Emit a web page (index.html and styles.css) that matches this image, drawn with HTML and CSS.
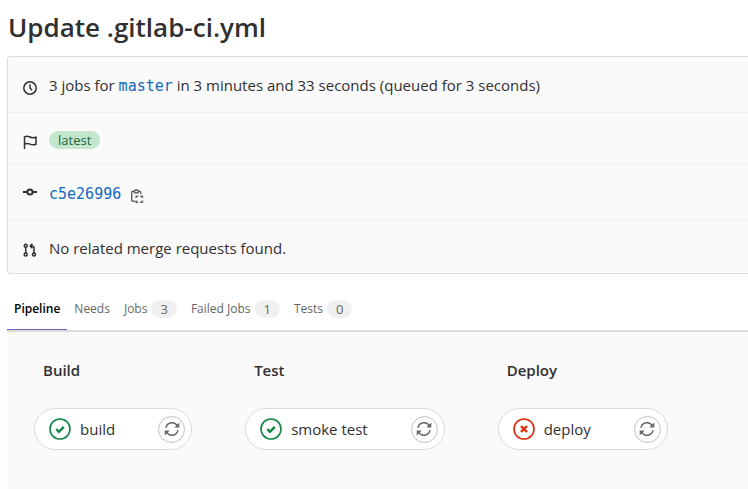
FILE: index.html
```html
<!DOCTYPE html>
<html lang="en">
<head>
  <meta charset="utf-8">
  <title>Update .gitlab-ci.yml</title>
  <link rel="stylesheet" href="styles.css">
</head>
<body>

<!-- shared icons -->
<svg class="hidden">
  <symbol id="retry" viewBox="0 0 16 16">
    <path d="M2 6.8A6.1 6.1 0 0 1 13.4 5M14 9.2A6.1 6.1 0 0 1 2.6 11" fill="none" stroke="currentColor" stroke-width="1.5"/>
    <path d="M15.3 1.5v5h-5zM.7 14.5v-5h5z" fill="currentColor"/>
  </symbol>
  <symbol id="success" viewBox="0 0 22 22">
    <circle cx="11" cy="11" r="10" fill="none" stroke="currentColor" stroke-width="1.6"/>
    <path d="M7.3 11.2l2.7 2.6 4.8-4.9" fill="none" stroke="currentColor" stroke-width="2.4"/>
  </symbol>
  <symbol id="failed" viewBox="0 0 22 22">
    <circle cx="11" cy="11" r="10" fill="none" stroke="currentColor" stroke-width="1.6"/>
    <path d="M8 8l6 6M14 8l-6 6" fill="none" stroke="currentColor" stroke-width="2.4"/>
  </symbol>
</svg>

<h1>Update .gitlab-ci.yml</h1>

<div class="info-well">
  <div class="well-row">
    <svg class="icon low" viewBox="0 0 14 14">
      <circle cx="7" cy="7" r="6.2"/>
      <path d="M7 3.2V7l2 2.2"/>
    </svg>
    <span>3 jobs for <a class="mono" href="#">master</a> in 3 minutes and 33 seconds (queued for 3 seconds)</span>
  </div>
  <div class="well-row">
    <svg class="icon low" viewBox="0 0 14 14">
      <path d="M1.5 14V1.8c2-1 3.5-.8 5.500.2s3.5 1.2 6 .3v7c-2.5.9-4 .7-6-.2s-3.5-1-5.500 0"/>
    </svg>
    <span class="badge-latest">latest</span>
  </div>
  <div class="well-row">
    <svg class="icon" viewBox="0 0 14 14">
      <circle cx="7" cy="5" r="2.6" stroke-width="2"/>
      <path d="M0 5h4M10 5h4" stroke-width="2"/>
    </svg>
    <a class="mono" href="#">c5e26996</a>
    <button class="copy" aria-label="Copy commit SHA">
      <svg class="icon low" viewBox="0 0 14 14">
        <path d="M5 12.3H2.7a1 1 0 0 1-1-1V3.2a1 1 0 0 1 1-1H4M8.5 2.2h1.2a1 1 0 0 1 1 1V5"/>
        <path d="M4.5 1.8V3.7h3.7V1.8L6.3.7z"/>
        <path d="M6.200 9V7.200h2M10.200 7.200h2.200V9M12.400 11.500v1.800h-2.200M8.200 13.300h-2v-1.800"/>
      </svg>
    </button>
  </div>
  <div class="well-row">
    <svg class="icon low" viewBox="0 0 14 14">
      <circle cx="2.7" cy="2.7" r="1.500"/>
      <circle cx="2.7" cy="11.600" r="1.500"/>
      <circle cx="11" cy="11.600" r="1.500"/>
      <path d="M2.7 4.2v6M11 10V5q0-2-2-2H8M9.4.8L7.2 3l2.2 2.2"/>
    </svg>
    <span>No related merge requests found.</span>
  </div>
</div>

<nav class="tabs">
  <a class="tab active" href="#">Pipeline</a>
  <a class="tab" href="#">Needs</a>
  <a class="tab" href="#">Jobs <span class="count">3</span></a>
  <a class="tab" href="#">Failed Jobs <span class="count">1</span></a>
  <a class="tab" href="#">Tests <span class="count">0</span></a>
</nav>

<div class="graph">
  <div class="stage">
    <h2>Build</h2>
    <div class="job">
      <svg class="status success"><use href="#success"/></svg>
      <a href="#">build</a>
      <button class="retry" aria-label="Retry build"><svg><use href="#retry"/></svg></button>
    </div>
  </div>
  <div class="stage">
    <h2>Test</h2>
    <div class="job">
      <svg class="status success"><use href="#success"/></svg>
      <a href="#">smoke test</a>
      <button class="retry" aria-label="Retry smoke test"><svg><use href="#retry"/></svg></button>
    </div>
  </div>
  <div class="stage">
    <h2>Deploy</h2>
    <div class="job">
      <svg class="status failed"><use href="#failed"/></svg>
      <a href="#">deploy</a>
      <button class="retry" aria-label="Retry deploy"><svg><use href="#retry"/></svg></button>
    </div>
  </div>
</div>

</body>
</html>
```
FILE: styles.css
```css
* {
  box-sizing: border-box;
}

body {
  margin: 0;
  padding-left: 7px;
  min-height: 100vh;
  display: flex;
  flex-direction: column;
  font-family: "Open Sans", "Noto Sans", sans-serif;
  font-size: 15px;
  line-height: 22px;
  color: #303030;
}

a {
  color: #1068bf;
  text-decoration: none;
}

button {
  padding: 0;
  border: 0;
  background: none;
  color: #666;
  cursor: pointer;
}

.hidden {
  display: none;
}

h1 {
  margin: 0;
  padding: 7px 1px 9px;
  font-size: 26px;
  line-height: 40px;
  font-weight: 600;
}

.info-well {
  border: 1px solid #dbdbdb;
  border-right: 0;
  border-radius: 4px 0 0 4px;
  background: #fafafa;
}

.well-row {
  display: flex;
  align-items: center;
  height: 52px;
  padding: 2px 15px 0;
  border-bottom: 1px solid #f0f0f0;
}

.well-row:nth-child(odd) {
  height: 56px;
}

.well-row:last-child {
  border-bottom: 0;
}

.well-row > .icon {
  margin-right: 12px;
}

.icon {
  width: 14px;
  height: 14px;
  fill: none;
  stroke: currentColor;
  stroke-width: 1.5;
}

.well-row .low {
  margin-top: 4px;
}

.mono {
  font-family: "DejaVu Sans Mono", monospace;
}

.badge-latest {
  padding: 0 9px;
  border-radius: 9px;
  background: #c3e6cd;
  color: #24663b;
  font-size: 13px;
  line-height: 18px;
}

.copy {
  display: flex;
  margin-left: 9px;
}

.tabs {
  display: flex;
  margin-top: 13px;
  border-bottom: 2px solid #dbdbdb;
  font-size: 12px;
}

.tab {
  display: flex;
  align-items: center;
  gap: 4px;
  height: 43px;
  padding: 2px 7px 0;
  border-bottom: 1px solid transparent;
  color: #666;
}

.active {
  border-color: #6666c4;
  color: #000;
  font-weight: 600;
}

.count {
  padding: 0 9px;
  border-radius: 9px;
  background: #f0f0f0;
  font-size: 13px;
  line-height: 18px;
}

.graph {
  flex: 1;
  display: flex;
  gap: 53px;
  padding: 27px;
  background: #fafafa;
}

h2 {
  margin: 0 9px 27px;
  font-size: 15px;
  line-height: 22px;
  font-weight: 600;
}

.job {
  display: flex;
  align-items: center;
  height: 42px;
  padding: 0 6px 0 14px;
  border: 1px solid #dbdbdb;
  border-radius: 21px;
  background: #fff;
}

.job a {
  margin: 0 43px 0 9px;
  color: #303030;
  white-space: nowrap;
}

.status {
  width: 22px;
  height: 22px;
}

.success {
  color: #108548;
}

.failed {
  color: #dd2b0e;
}

.retry {
  display: flex;
  align-items: center;
  justify-content: center;
  width: 27px;
  height: 27px;
  border: 1px solid #bfbfbf;
  border-radius: 50%;
}

.retry svg {
  width: 16px;
  height: 16px;
}
```
